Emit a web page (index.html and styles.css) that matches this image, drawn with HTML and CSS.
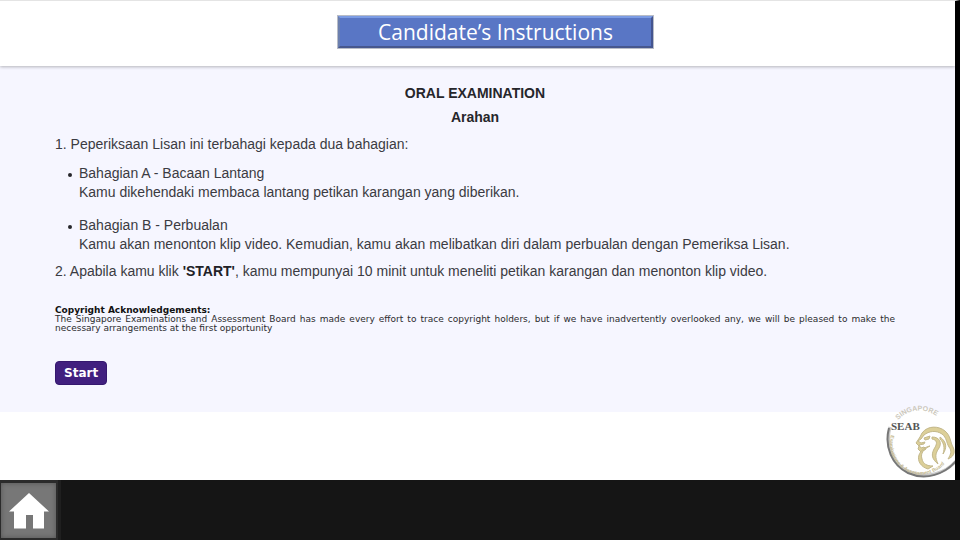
FILE: index.html
```html
<!DOCTYPE html>
<html lang="ms">
<head>
<meta charset="utf-8">
<title>Candidate’s Instructions</title>
<link rel="stylesheet" href="styles.css">
</head>
<body>
<div class="screen">
  <header class="topbar">
    <h1 class="banner">Candidate’s Instructions</h1>
  </header>
  <main class="panel">
    <h2 class="heading">ORAL EXAMINATION</h2>
    <h3 class="heading">Arahan</h3>
    <p class="step">1. Peperiksaan Lisan ini terbahagi kepada dua bahagian:</p>
    <ul class="parts">
      <li>Bahagian A - Bacaan Lantang<br>Kamu dikehendaki membaca lantang petikan karangan yang diberikan.</li>
      <li>Bahagian B - Perbualan<br>Kamu akan menonton klip video. Kemudian, kamu akan melibatkan diri dalam perbualan dengan Pemeriksa Lisan.</li>
    </ul>
    <p class="step">2. Apabila kamu klik <strong>'START'</strong>, kamu mempunyai 10 minit untuk meneliti petikan karangan dan menonton klip video.</p>
    <div class="copyright">
      <strong>Copyright Acknowledgements:</strong>
      <p>The Singapore Examinations and Assessment Board has made every effort to trace copyright holders, but if we have inadvertently overlooked any, we will be pleased to make the necessary arrangements at the first opportunity</p>
    </div>
    <button class="start" type="button">Start</button>
  </main>
  <svg class="logo" viewBox="0 0 70 74" width="70" height="74" role="img" aria-label="SEAB">
    <defs>
      <path id="arc-top" d="M13 15A29 29 0 0 1 60 21"/>
      <path id="arc-bottom" d="M6 30A31 31 0 0 0 66 47"/>
    </defs>
    <circle cx="37" cy="36" r="33" fill="#fff"/>
    <path d="M5 22C0 41 8 59 24 67C42 74 61 68 71 56" fill="none" stroke="#c8c8c8" stroke-width="3"/>
    <path d="M4 23C-1 42 7 60 23 68C41 76 60 69 71 56" fill="none" stroke="#777" stroke-width="2"/>
    <text class="ring"><textPath href="#arc-top">SINGAPORE</textPath></text>
    <text class="ring ring-small"><textPath href="#arc-bottom">Examinations &amp; Assessment Board</textPath></text>
    <g fill="#dccf98" stroke="#c3b88c" stroke-width="1" stroke-linejoin="round">
      <path d="M37 28C43 20 54 21 60 26C66 31 65 37 68 42C71 48 68 52 63 54C66 49 67 46 64 42C61 37 62 33 57 29C51 25 44 26 39 30L36 34L33 36L36 38L40 37L39 39L34 40L36 43L39 42L41 44L36 47L33 44L34 41L31 38L35 32Z"/>
      <path d="M39 33L45 31L44 34L40 35Z"/>
      <path d="M45 41C39 44 35 48 37 54C38 59 42 61 48 61L43 64C36 62 32 56 34 50C36 45 40 42 45 41Z"/>
      <path d="M47 32C55 32 57 38 54 43C50 49 50 52 53 59C47 54 46 50 49 44C53 38 52 35 47 34Z"/>
      <path d="M55 32C62 37 62 43 58 49C60 43 59 38 55 34Z"/>
    </g>
    <text class="seab" x="6" y="25">SEAB</text>
  </svg>
</div>
<footer class="bottombar">
  <a class="home" href="#" aria-label="Home">
    <svg viewBox="0 0 40 36" width="40" height="36"><path fill="#fff" d="M20 0L40 18.500H35V35.500H24V22H17V35.500H5V18.500H0Z"/></svg>
  </a>
</footer>
</body>
</html>
```
FILE: styles.css
```css
* { box-sizing: border-box; }

body {
  margin: 0;
  min-height: 100vh;
  display: flex;
  flex-direction: column;
  background: #151515;
  font-family: "Liberation Sans", Arial, sans-serif;
  font-size: 14px;
  line-height: 19px;
  color: #3b3b42;
}

.screen {
  position: relative;
  flex: 1;
  overflow: hidden;
  background: #fff;
  border-top: 1px solid #e4e4e4;
  border-right: 5px solid #000;
}

.topbar {
  position: relative;
  display: flex;
  justify-content: center;
  padding: 14px 0 17px 36px;
  background: #fff;
  box-shadow: 0 1px 3px #b4b4ba;
}

.banner {
  margin: 0;
  width: 317px;
  border: 3px solid;
  border-color: #7c9ce4 #445590 #46578e #6b7faf;
  outline: 1px solid #b8bcc6;
  outline-offset: -1px;
  background: #5976c5;
  color: #fff;
  font: 400 21px/28px "Open Sans", "Noto Sans", sans-serif;
  text-align: center;
}

.panel {
  padding: 18px 60px 27px 55px;
  background: #f6f6ff;
}

.heading {
  margin: 0 0 5px;
  color: #26262b;
  font-size: 14px;
  font-weight: 700;
  line-height: 19px;
  text-align: center;
}

.step { margin: 0; padding: 3px 0; }

.step strong { color: #212126; }

.parts {
  margin: 0;
  padding: 7px 0 5px 24px;
  list-style: none;
}

.parts li { position: relative; }

.parts li::before {
  content: "";
  position: absolute;
  left: -11px;
  top: 9px;
  width: 4px;
  height: 4px;
  border-radius: 50%;
  background: #26262b;
}

.parts li + li { margin-top: 14px; }

.copyright {
  margin-top: 22px;
  color: #2b2b2e;
  font: 9px/9px "DejaVu Sans", Verdana, sans-serif;
  text-align: justify;
}

.copyright strong { color: #111; }

.copyright p { margin: 0; }

.start {
  display: block;
  margin-top: 28px;
  padding: 0 8px;
  border: 1px solid #35186e;
  border-radius: 4px;
  background: #41207f;
  color: #fff;
  font: 700 12px/22px "DejaVu Sans", Verdana, sans-serif;
}

.logo {
  position: absolute;
  right: 0;
  bottom: 1px;
}

.ring {
  fill: #cbc7bb;
  font: 700 7px "Liberation Sans", sans-serif;
}

.ring-small {
  fill: #c5b98f;
  font-size: 5px;
}

.seab {
  fill: #555;
  font: 700 11px "Liberation Serif", serif;
}

.bottombar { display: flex; }

.home {
  display: flex;
  align-items: center;
  justify-content: center;
  width: 58px;
  height: 60px;
  border: solid #2b2b2b;
  border-width: 3px 2px 2px 1px;
  background: #777;
  box-shadow: inset 0 0 5px #555, 3px 0 0 #1f1f1f;
}
```
